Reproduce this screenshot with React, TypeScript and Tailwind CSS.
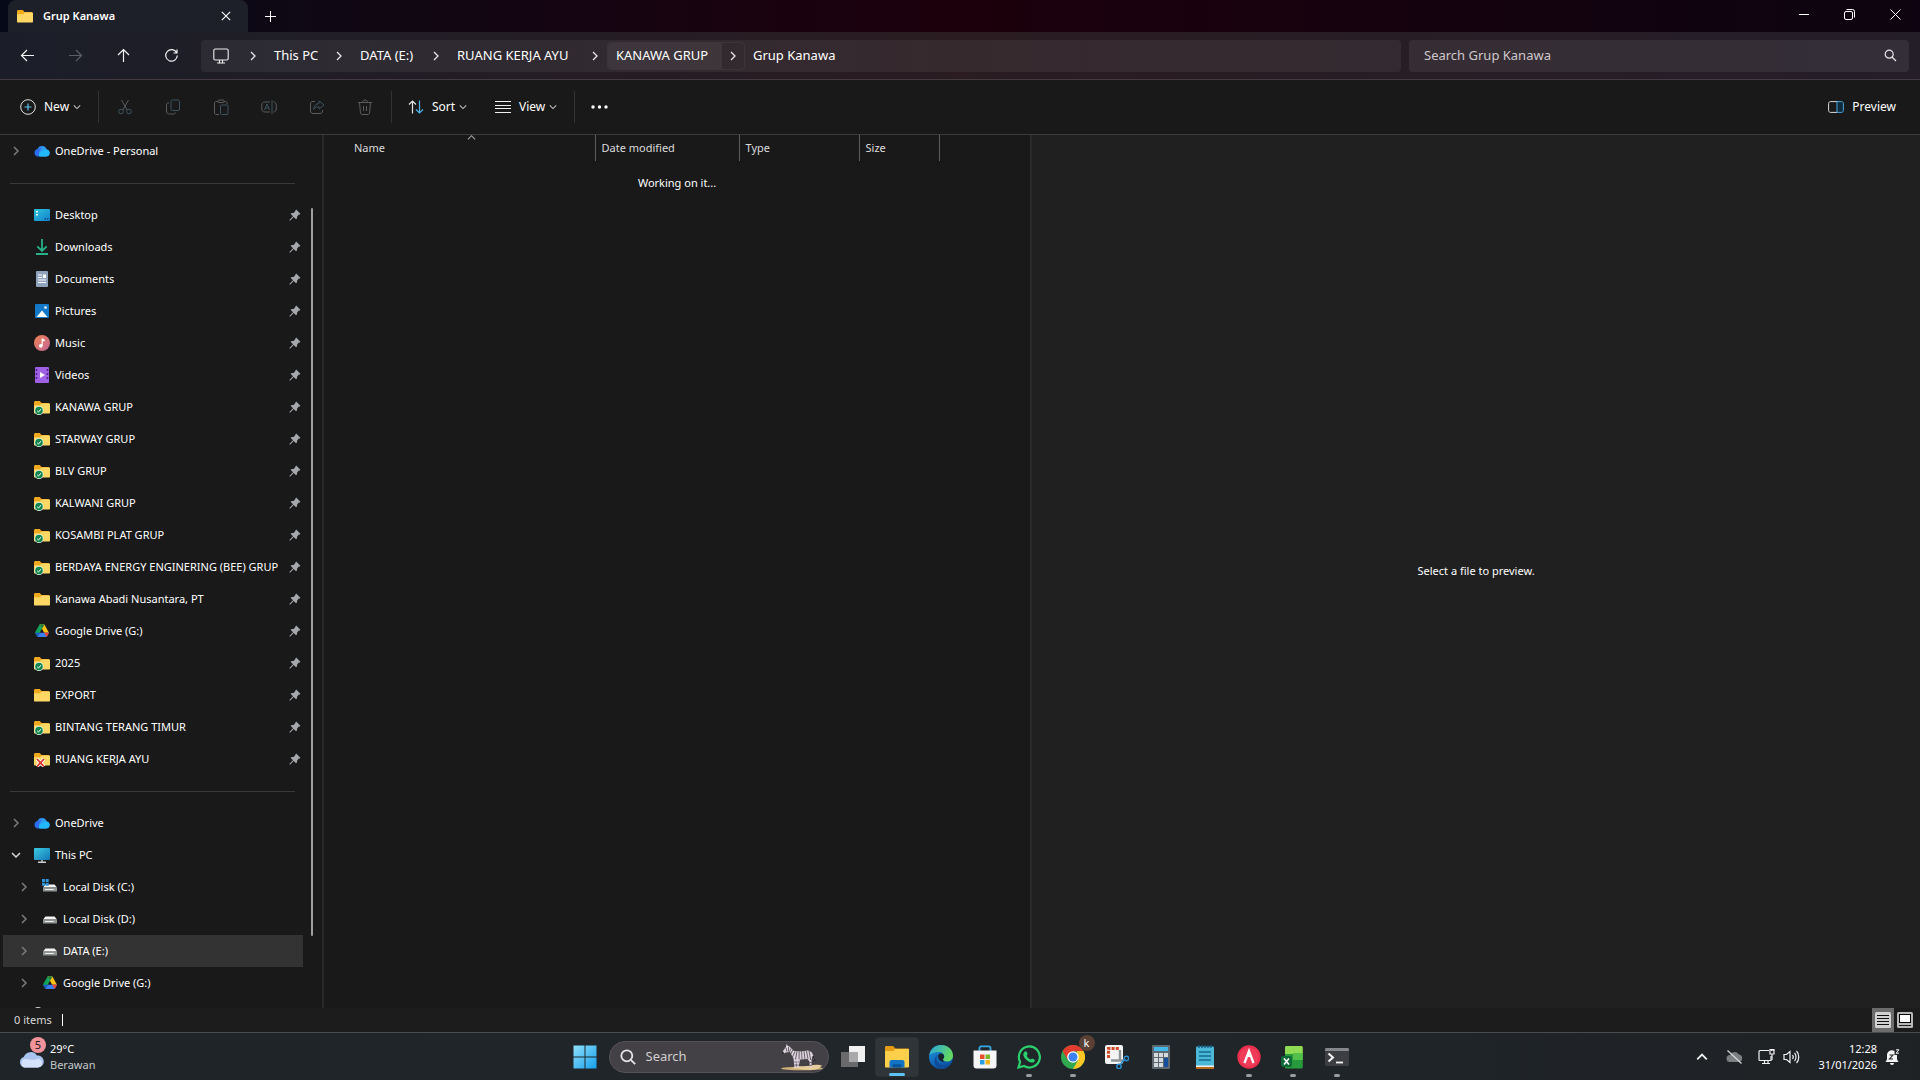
import React, { useState } from 'react';

type Glyph = React.FC;

interface NavItem {
  label: string;
  icon: Glyph;
  pinned?: boolean;
  chevron?: 'right' | 'down';
  nested?: boolean;
}

/* ---------- Sidebar icons ---------- */

const OneDriveIcon: Glyph = () => (
  <svg width="16" height="16" viewBox="0 0 16 16">
    <path d="M4 13.5A3.8 3.8 0 0 1 3.6 6 5 5 0 0 1 8 3l4 3.5-6 7z" fill="#1a6fe0" />
    <path d="M8 3a5 5 0 0 1 4.700 3.400A3.600 3.600 0 0 1 12.500 13.500H6L3.600 6A5 5 0 0 1 8 3z" fill="#2f9bf5" />
    <path d="M12.500 13.500H5.500a3 3 0 0 1 .8-4.600l3.400-2a4 4 0 0 1 3-.5 3.600 3.600 0 0 1-.2 7.100z" fill="#22b8fb" />
    <path d="M4 13.500A3.800 3.800 0 0 1 2 6.900L8 4 5 9.500z" fill="#2d6cf0" />
  </svg>
);

const DesktopIcon: Glyph = () => (
  <svg width="16" height="16" viewBox="0 0 16 16">
    <defs>
      <linearGradient id="desk" x1="0" y1="0" x2="1" y2="1">
        <stop offset="0" stopColor="#2bc4d8" />
        <stop offset="1" stopColor="#1580d0" />
      </linearGradient>
    </defs>
    <rect x="0" y="2" width="16" height="12" rx="1" fill="url(#desk)" />
    <path d="M2 4h2v1.500H2zM2 7h2v1.500H2z" fill="#e8fbff" />
    <path d="M10.500 11h1.500v1.500h-1.500zM13 11h1.500v1.500H13z" fill="#0b4a80" />
  </svg>
);

const DownloadsIcon: Glyph = () => (
  <svg width="16" height="16" viewBox="0 0 16 16" fill="none" stroke="#28b088" strokeWidth="1.800">
    <path d="M8 0v11.500M3.300 7.300L8 12l4.700-4.700M2 15h12" />
  </svg>
);

const DocumentsIcon: Glyph = () => (
  <svg width="16" height="16" viewBox="0 0 16 16">
    <rect x="2" y="0" width="12" height="16" rx="1" fill="#8fa3bd" />
    <path d="M4 4h4M4 6.500h4M4 9h8M4 11.500h8" stroke="#fff" strokeWidth="1.200" />
    <rect x="9" y="3.500" width="3" height="3.500" fill="#fff" />
  </svg>
);

const PicturesIcon: Glyph = () => (
  <svg width="16" height="16" viewBox="0 0 16 16">
    <rect x="1" y="1" width="14" height="14" rx="1" fill="#1478c8" />
    <path d="M2.500 14L8 7.500l5.500 6.500z" fill="#fff" />
    <circle cx="11.500" cy="4.500" r="1.300" fill="#fff" />
  </svg>
);

const MusicIcon: Glyph = () => (
  <svg width="16" height="16" viewBox="0 0 16 16">
    <defs>
      <linearGradient id="music" x1="0" y1="0" x2="1" y2="1">
        <stop offset="0" stopColor="#ee8450" />
        <stop offset="1" stopColor="#c2649a" />
      </linearGradient>
    </defs>
    <circle cx="8" cy="8" r="8" fill="url(#music)" />
    <circle cx="6.800" cy="10.800" r="1.900" fill="#fff" />
    <path d="M7.600 3.500h1.200l2 1.500v1.500l-2-.8v5H7.600z" fill="#fff" />
  </svg>
);

const VideosIcon: Glyph = () => (
  <svg width="16" height="16" viewBox="0 0 16 16">
    <rect x="1" y="0" width="14" height="16" rx="1" fill="#a060e4" />
    <path d="M2.500 2v12M13.500 2v12" stroke="#4a2090" strokeWidth="1.500" strokeDasharray="2 2" />
    <path d="M6 5l5 3-5 3z" fill="#fff" />
  </svg>
);

const folderBody = (
  <>
    <path d="M0 3.500C0 2.500.6 2 1.500 2h4.300l1.700 2H14c1 0 1.500.5 1.500 1.500V8H0z" fill="#f0a81c" />
    <path d="M0 6.200h6L7.700 4.500H15c.6 0 1 .4 1 1v8c0 .6-.4 1-1 1H1c-.6 0-1-.4-1-1z" fill="#ffd765" />
  </>
);

const FolderIcon: Glyph = () => (
  <svg width="16" height="16" viewBox="0 0 16 16">{folderBody}</svg>
);

const SyncedFolderIcon: Glyph = () => (
  <svg width="16" height="16" viewBox="0 0 16 16">
    {folderBody}
    <circle cx="5" cy="11.500" r="4.500" fill="#e8f5ee" />
    <circle cx="5" cy="11.500" r="3.800" fill="#12854c" />
    <path d="M3.200 11.800l1.300 1.300 2.500-3" stroke="#fff" strokeWidth="1" fill="none" />
  </svg>
);

const ErrorFolderIcon: Glyph = () => (
  <svg width="16" height="16" viewBox="0 0 16 16">
    {folderBody}
    <path d="M3 8l7 7.500M10 8l-7 7.500" stroke="#fff" strokeWidth="3.400" />
    <path d="M3 8l7 7.500M10 8l-7 7.500" stroke="#d8362c" strokeWidth="1.800" />
  </svg>
);

const DriveIcon: Glyph = () => (
  <svg width="16" height="16" viewBox="0 0 16 16">
    <path d="M5.600 1.500h4.800L8 5.700 3.400 13.700 1 9.500z" fill="#10a35a" />
    <path d="M10.400 1.500L15 9.700h-4.800L5.600 1.500z" fill="#fcbf14" />
    <path d="M5.600 1.500h4.800L8 5.700z" fill="#0d8043" />
    <path d="M3.400 14l2.400-4.300H15L12.600 14z" fill="#3c7df0" />
    <path d="M12.600 14L10.200 9.700H15z" fill="#e8453a" />
    <path d="M3.400 14L1 9.700h4.800z" fill="#2158c8" />
  </svg>
);

const ThisPcIcon: Glyph = () => (
  <svg width="16" height="16" viewBox="0 0 16 16">
    <defs>
      <linearGradient id="pc" x1="0" y1="0" x2="1" y2="1">
        <stop offset="0" stopColor="#3ccbe0" />
        <stop offset="1" stopColor="#1277b8" />
      </linearGradient>
    </defs>
    <rect x="0" y="1" width="16" height="12" rx="1" fill="url(#pc)" />
    <path d="M8 13v2M4 15.300h8" stroke="#c8d0d4" strokeWidth="1.400" />
  </svg>
);

const diskBody = (
  <>
    <path d="M3.500 5.500h9l2.500 3H1z" fill="#f4f4f4" />
    <rect x="1" y="8.500" width="14" height="4" rx=".5" fill="#8f9492" />
    <path d="M3 10.500h9" stroke="#e8ece8" strokeWidth="1" />
  </>
);

const DiskIcon: Glyph = () => (
  <svg width="16" height="16" viewBox="0 0 16 16">{diskBody}</svg>
);

const SystemDiskIcon: Glyph = () => (
  <svg width="16" height="16" viewBox="0 0 16 16">
    {diskBody}
    <path d="M0 0h3v3H0zM3.700 0h3v3h-3zM0 3.700h3v3H0zM3.700 3.700h3v3h-3z" fill="#2f93d8" />
  </svg>
);

const NetworkIcon: Glyph = () => (
  <svg width="16" height="16" viewBox="0 0 16 16">
    <circle cx="4" cy="4" r="4" fill="#d5d8da" />
    <rect x="2" y="6" width="13" height="8" fill="#3ccbe0" />
  </svg>
);

const PinIcon: Glyph = () => (
  <svg width="12" height="12" viewBox="0 0 12 12" fill="#a4a7ab">
    <path d="M7.200.6L11.400 4.800 10.500 5.700 9.900 5.600 8.100 7.400 8 9.500 7 10.300 4.700 8 1.300 11.400.4 11.600.6 10.700 4 7.300 1.700 5 2.500 4 4.600 3.900 6.400 2.100 6.300 1.500z" />
  </svg>
);

const Chevron: React.FC<{ dir?: 'right' | 'down' | 'up'; size?: number; color?: string; width?: number }> = ({
  dir = 'right', size = 10, color = '#e6e6e6', width = 1.3,
}) => {
  const d = dir === 'right' ? 'M3 1l4 4-4 4' : dir === 'down' ? 'M1 3l4 4 4-4' : 'M1 7l4-4 4 4';
  return (
    <svg width={size} height={size} viewBox="0 0 10 10" fill="none" stroke={color} strokeWidth={width}>
      <path d={d} />
    </svg>
  );
};

/* ---------- Data ---------- */

const QUICK_ACCESS: NavItem[] = [
  { label: 'Desktop', icon: DesktopIcon, pinned: true },
  { label: 'Downloads', icon: DownloadsIcon, pinned: true },
  { label: 'Documents', icon: DocumentsIcon, pinned: true },
  { label: 'Pictures', icon: PicturesIcon, pinned: true },
  { label: 'Music', icon: MusicIcon, pinned: true },
  { label: 'Videos', icon: VideosIcon, pinned: true },
  { label: 'KANAWA GRUP', icon: SyncedFolderIcon, pinned: true },
  { label: 'STARWAY GRUP', icon: SyncedFolderIcon, pinned: true },
  { label: 'BLV GRUP', icon: SyncedFolderIcon, pinned: true },
  { label: 'KALWANI GRUP', icon: SyncedFolderIcon, pinned: true },
  { label: 'KOSAMBI PLAT GRUP', icon: SyncedFolderIcon, pinned: true },
  { label: 'BERDAYA ENERGY ENGINERING (BEE) GRUP', icon: SyncedFolderIcon, pinned: true },
  { label: 'Kanawa Abadi Nusantara, PT', icon: FolderIcon, pinned: true },
  { label: 'Google Drive (G:)', icon: DriveIcon, pinned: true },
  { label: '2025', icon: SyncedFolderIcon, pinned: true },
  { label: 'EXPORT', icon: FolderIcon, pinned: true },
  { label: 'BINTANG TERANG TIMUR', icon: SyncedFolderIcon, pinned: true },
  { label: 'RUANG KERJA AYU', icon: ErrorFolderIcon, pinned: true },
];

const DEVICES: NavItem[] = [
  { label: 'OneDrive', icon: OneDriveIcon, chevron: 'right' },
  { label: 'This PC', icon: ThisPcIcon, chevron: 'down' },
  { label: 'Local Disk (C:)', icon: SystemDiskIcon, chevron: 'right', nested: true },
  { label: 'Local Disk (D:)', icon: DiskIcon, chevron: 'right', nested: true },
  { label: 'DATA (E:)', icon: DiskIcon, chevron: 'right', nested: true },
  { label: 'Google Drive (G:)', icon: DriveIcon, chevron: 'right', nested: true },
];

const CRUMBS = [
  { label: 'This PC', width: 'w-[62px]' },
  { label: 'DATA (E:)', width: 'w-[73px]' },
  { label: 'RUANG KERJA AYU', width: 'w-[135px]' },
  { label: 'KANAWA GRUP', width: 'w-[114px]' },
];

const COLUMNS = [
  { label: 'Name', cell: 'w-[271px] pl-[30px]' },
  { label: 'Date modified', cell: 'w-[144px] pl-1.5' },
  { label: 'Type', cell: 'w-[120px] pl-1.5' },
  { label: 'Size', cell: 'w-20 pl-1.5' },
];

const EDIT_ACTIONS: { label: string; icon: React.ReactNode }[] = [
  {
    label: 'Cut',
    icon: (
      <>
        <path d="M4.500 1l5.600 10M11.500 1L5.900 11" />
        <circle cx="4" cy="12.500" r="2.300" stroke="#3c5560" />
        <circle cx="12" cy="12.500" r="2.300" stroke="#3c5560" />
      </>
    ),
  },
  {
    label: 'Copy',
    icon: (
      <>
        <rect x="6" y="1" width="8.500" height="10.500" rx="1.500" stroke="#3c5560" />
        <path d="M4 4H3C2 4 1.500 5 1.500 6v6c0 2 1 3 3 3h4c1 0 2-.5 2-1.500" />
      </>
    ),
  },
  {
    label: 'Paste',
    icon: (
      <>
        <path d="M5 2.500H3c-.8 0-1.500.5-1.500 1.500v10c0 1 .5 1.500 1.500 1.500h3M11 2.500h1.500c1 0 1.500.5 1.500 1.500v1" />
        <rect x="5" y="1" width="6" height="2.500" rx="1" />
        <rect x="7.500" y="6" width="7.500" height="9.500" rx="1" stroke="#3c5560" />
      </>
    ),
  },
  {
    label: 'Rename',
    icon: (
      <>
        <path d="M9 3H4C2 3 .8 4 .8 6v4c0 2 1.200 3 3.200 3h5M12.500 3c2 0 2.700 1.500 2.700 3v4c0 1.500-.7 3-2.700 3" />
        <path d="M3.500 11L6 5l2.500 6M4.300 9h3.400M11 1v14" stroke="#3c5560" />
      </>
    ),
  },
  {
    label: 'Share',
    icon: (
      <>
        <path d="M6 2.500H4C2.300 2.500 1.500 3.500 1.500 5v7c0 1.500 1 2.500 2.500 2.500h7c1.500 0 2.500-1 2.500-2.500v-1" />
        <path d="M10 2l5 4-5 4V7.800C7.500 7.700 6 8.500 4.500 10.500 5 7 7 4.700 10 4.500z" stroke="#3c5560" />
      </>
    ),
  },
  {
    label: 'Delete',
    icon: (
      <path d="M1 3.500h14M5.500 3.500C5.500 2 6.500 1 8 1s2.500 1 2.500 2.500M2.500 3.500l1 10.500c.1 1 .7 1.500 1.500 1.500h6c.8 0 1.400-.5 1.500-1.500l1-10.500M6.500 7v5M9.500 7v5" />
    ),
  },
];

/* ---------- Window chrome ---------- */

const TitleBar: React.FC = () => (
  <header className="flex h-8 shrink-0 items-stretch bg-linear-to-r from-[#060a18] via-[#1c000c] to-[#0c0410] pl-2">
    <div role="tab" className="flex w-60 items-center rounded-t-lg bg-[#1d2028] pl-[9px] pr-2.5">
      <FolderIcon />
      <span className="ml-2.5 flex-1 text-[11px] font-semibold text-white">Grup Kanawa</span>
      <button aria-label="Close tab" className="flex h-6 w-6 items-center justify-center">
        <svg width="10" height="10" viewBox="0 0 10 10" stroke="#fff" strokeWidth="1.100"><path d="M.8.8l8.400 8.400M9.200.8L.8 9.200" /></svg>
      </button>
    </div>
    <button aria-label="New tab" className="flex w-11 items-center justify-center">
      <svg width="11" height="11" viewBox="0 0 11 11" stroke="#fff" strokeWidth="1"><path d="M5.500 0v11M0 5.500h11" /></svg>
    </button>
    <div className="flex-1" />
    <div className="flex pb-1 pr-0.5">
      <button aria-label="Minimize" className="flex w-[45px] items-center justify-center">
        <svg width="10" height="10" viewBox="0 0 10 10" stroke="#fff"><path d="M0 5.500h10" /></svg>
      </button>
      <button aria-label="Restore" className="flex w-[46px] items-center justify-center">
        <svg width="11" height="11" viewBox="0 0 11 11" fill="none" stroke="#fff"><rect x=".5" y="2.500" width="8" height="8" rx="1.500" /><path d="M2.500.5h6a2 2 0 0 1 2 2v6" /></svg>
      </button>
      <button aria-label="Close" className="flex w-[46px] items-center justify-center">
        <svg width="11" height="11" viewBox="0 0 11 11" stroke="#fff"><path d="M.5.5l10 10M10.500.5l-10 10" /></svg>
      </button>
    </div>
  </header>
);

const NAV_BUTTONS = [
  { label: 'Back', d: 'M14 7.500H1.500M7 2L1.500 7.500 7 13', stroke: '#f2f2f2' },
  { label: 'Forward', d: 'M1 7.500h12.500M8 2l5.500 5.500L8 13', stroke: '#5c5e66' },
  { label: 'Up', d: 'M7.500 14V1.500M2 7l5.500-5.500L13 7', stroke: '#f2f2f2' },
  { label: 'Refresh', d: 'M12.800 5A5.800 5.800 0 1 0 13.300 7.500M13 1.500V5H9.500', stroke: '#f2f2f2' },
];

const AddressRow: React.FC = () => {
  const [query, setQuery] = useState('');
  return (
    <div className="flex h-12 shrink-0 items-center border-b border-[#443a41] bg-linear-to-r from-[#1b1e29] via-[#2a1c21] to-[#241e29] pl-[3px] pr-[11px]">
      {NAV_BUTTONS.map(b => (
        <button key={b.label} aria-label={b.label} className="flex h-8 w-12 shrink-0 items-center justify-center">
          <svg width="15" height="15" viewBox="0 0 15 15" fill="none" stroke={b.stroke} strokeWidth="1.200"><path d={b.d} /></svg>
        </button>
      ))}
      <nav className="ml-1.5 mr-2 flex h-8 min-w-0 flex-1 items-center rounded bg-white/6 text-[13px] text-white">
        <button aria-label="Location" className="flex w-10 items-center justify-center">
          <svg width="16" height="16" viewBox="0 0 16 16" fill="none" stroke="#ededed" strokeWidth="1.100">
            <rect x=".8" y="1" width="14.400" height="11" rx="1.500" /><path d="M6.500 12v3M9.500 12v3M4 15h8" />
          </svg>
        </button>
        <span className="flex w-6 justify-center"><Chevron /></span>
        {CRUMBS.map(c => {
          const hot = c.label === 'KANAWA GRUP';
          return (
            <div key={c.label} className={`flex h-7 items-center rounded border ${hot ? 'border-white/5' : 'border-transparent'}`}>
              <button className={`h-full whitespace-nowrap pl-2 text-left ${c.width} ${hot ? 'rounded-l bg-white/6' : ''}`}>{c.label}</button>
              <button aria-label={`Open ${c.label}`} className="flex w-[22px] justify-center"><Chevron /></button>
            </div>
          );
        })}
        <button className="px-2">Grup Kanawa</button>
      </nav>
      <label className="flex h-8 w-[500px] min-w-0 items-center rounded bg-white/7 pl-[15px] pr-3">
        <input
          aria-label="Search Grup Kanawa"
          value={query}
          onChange={e => setQuery(e.target.value)}
          placeholder="Search Grup Kanawa"
          className="min-w-0 flex-1 bg-transparent text-[13px] text-white outline-none placeholder:text-[#cfc8cb]"
        />
        <svg width="13" height="13" viewBox="0 0 13 13" fill="none" stroke="#e8e4e6" strokeWidth="1.200"><circle cx="5.200" cy="5.200" r="4" /><path d="M8 8l4 4" /></svg>
      </label>
    </div>
  );
};

const Divider = () => <div className="h-8 w-px bg-[#333]" />;

const CommandBar: React.FC = () => (
  <div className="flex h-[55px] shrink-0 items-center border-b border-[#3c3c3c] bg-[#191919] text-[12px] text-white">
    <button className="flex w-[98px] items-center pl-5">
      <svg width="16" height="16" viewBox="0 0 16 16" fill="none" stroke="#e4e4e4">
        <circle cx="8" cy="8" r="7.300" /><path d="M8 4.500v7M4.500 8h7" stroke="#5cc0f0" strokeWidth="1.200" />
      </svg>
      <span className="ml-2 mr-1">New</span>
      <Chevron dir="down" size={8} color="#c0c0c0" />
    </button>
    <Divider />
    <div className="flex pl-0.5">
      {EDIT_ACTIONS.map(a => (
        <button key={a.label} aria-label={a.label} disabled className="flex h-8 w-12 items-center justify-center">
          <svg width="16" height="16" viewBox="0 0 16 16" fill="none" stroke="#5a5c5e">{a.icon}</svg>
        </button>
      ))}
    </div>
    <div className="ml-0.5"><Divider /></div>
    <button className="flex w-[87px] items-center pl-4">
      <svg width="16" height="14" viewBox="0 0 16 14" fill="none" strokeWidth="1.200">
        <path d="M4.500 13.500V1M1 4.500L4.500 1 8 4.500" stroke="#e4e4e4" /><path d="M11.500.5V13M8 9.500l3.500 3.500L15 9.500" stroke="#4fb4ea" />
      </svg>
      <span className="ml-2 mr-1">Sort</span>
      <Chevron dir="down" size={8} color="#c0c0c0" />
    </button>
    <button className="flex w-[95px] items-center pl-4">
      <svg width="16" height="12" viewBox="0 0 16 12" stroke="#f0f0f0"><path d="M0 .5h16M0 4.500h16M0 7.500h16M0 11.500h16" /></svg>
      <span className="ml-2 mr-1">View</span>
      <Chevron dir="down" size={8} color="#c0c0c0" />
    </button>
    <Divider />
    <button aria-label="See more" className="flex h-8 w-12 items-center justify-center">
      <svg width="17" height="4" viewBox="0 0 17 4" fill="#fff"><circle cx="2" cy="2" r="1.700" /><circle cx="8.500" cy="2" r="1.700" /><circle cx="15" cy="2" r="1.700" /></svg>
    </button>
    <button className="ml-auto flex items-center gap-2 pr-6">
      <svg width="16" height="12" viewBox="0 0 16 12" fill="none">
        <path d="M9 .6H2.500C1.400.6.600 1.400.6 2.500v7c0 1.100.8 1.900 1.900 1.900H9" stroke="#ddd" />
        <path d="M9 .6h4.500c1.100 0 1.900.8 1.900 1.900v7c0 1.100-.8 1.900-1.900 1.900H9z" stroke="#4aa8dc" fill="#0f2a3a" />
      </svg>
      Preview
    </button>
  </div>
);

/* ---------- Sidebar ---------- */

const NavRow: React.FC<{ item: NavItem; selected?: boolean; onSelect: () => void }> = ({ item, selected, onSelect }) => {
  const Icon = item.icon;
  return (
    <li>
      <button
        onClick={onSelect}
        className={`flex h-8 w-full items-center pr-0.5 text-left ${item.nested ? 'pl-[15px]' : 'pl-[7px]'} ${selected ? 'bg-[#333]' : ''}`}
      >
        <span className="flex w-3 shrink-0 justify-center">
          {item.chevron && <Chevron dir={item.chevron} size={10} width={1.5} color={item.chevron === 'down' ? '#d8d8d8' : '#7c7c7c'} />}
        </span>
        <span className="ml-3 shrink-0"><Icon /></span>
        <span className="ml-[5px] flex-1 whitespace-nowrap">{item.label}</span>
        {item.pinned && <span className="shrink-0"><PinIcon /></span>}
      </button>
    </li>
  );
};

const Sidebar: React.FC = () => {
  const [selected, setSelected] = useState('DATA (E:)');
  return (
    <aside className="flex w-[324px] shrink-0 overflow-hidden border-r-2 border-[#292929] text-[11px] text-white">
      <div className="w-[303px] shrink-0 pl-[3px]">
        <ul>
          <NavRow item={{ label: 'OneDrive - Personal', icon: OneDriveIcon, chevron: 'right' }} onSelect={() => setSelected('OneDrive - Personal')} />
        </ul>
        <hr className="mb-[15px] ml-[7px] mr-2 mt-4 border-[#3a3a3a]" />
        <ul>
          {QUICK_ACCESS.map(item => (
            <NavRow key={item.label} item={item} onSelect={() => setSelected(item.label)} />
          ))}
        </ul>
        <hr className="mb-[15px] ml-[7px] mr-2 mt-4 border-[#3a3a3a]" />
        <ul>
          {DEVICES.map(item => (
            <NavRow key={item.label} item={item} selected={item.label === selected} onSelect={() => setSelected(item.label)} />
          ))}
          <li>
            <button aria-label="Network" className="flex h-8 w-full items-center pl-[31px]"><NetworkIcon /></button>
          </li>
        </ul>
      </div>
      <div className="flex flex-1 justify-center pb-[72px] pr-0.5 pt-[73px]">
        <div className="w-0.5 rounded bg-[#9f9f9f]" />
      </div>
    </aside>
  );
};

/* ---------- File list & preview ---------- */

const FileList: React.FC = () => (
  <section className="min-w-0 flex-[707]">
    <table className="w-[615px] table-fixed border-collapse text-[11px] text-[#dcdcdc]">
      <thead>
        <tr className="h-[26px]">
          {COLUMNS.map(c => (
            <th key={c.label} scope="col" className={`relative border-r border-[#5c5c5c] p-0 text-left font-normal ${c.cell}`}>
              {c.label}
              {c.label === 'Name' && (
                <span className="absolute -top-0.5 left-1/2 ml-2"><Chevron dir="up" size={9} color="#a8a8a8" width={1.2} /></span>
              )}
            </th>
          ))}
        </tr>
      </thead>
    </table>
    <p className="mt-3 text-center text-[11px] leading-5 text-white">Working on it...</p>
  </section>
);

const PreviewPane: React.FC = () => (
  <section className="flex min-w-0 flex-[889] items-center justify-center border-l-2 border-[#2a2a2a] bg-[#202020] text-[11px] text-white">
    Select a file to preview.
  </section>
);

const StatusBar: React.FC = () => (
  <footer className="flex h-6 shrink-0 items-center bg-[#1c1c1c] pl-3.5 pr-[7px] text-[11px] text-[#d8d8d8]">
    <span>0 items</span>
    <span className="ml-2.5 h-3 w-px bg-white" />
    <button aria-label="Details view" className="ml-auto flex h-full w-[22px] items-center justify-center bg-[#6c6c6c]">
      <svg width="16" height="16" viewBox="0 0 16 16"><rect width="16" height="16" rx="1.500" fill="#d2d2d2" /><path d="M2 3.500h12M2 6.500h12M2 9.500h12M2 12.500h12" stroke="#111" /></svg>
    </button>
    <button aria-label="Large icons view" className="ml-[3px]">
      <svg width="16" height="16" viewBox="0 0 16 16"><rect width="16" height="16" rx="1.500" fill="#b8b8b8" /><rect x="2.500" y="2.500" width="11" height="8" fill="#fff" stroke="#000" /><path d="M2 13.500h12" stroke="#222" /></svg>
    </button>
  </footer>
);

/* ---------- Taskbar ---------- */

interface TaskApp {
  name: string;
  running?: boolean;
  active?: boolean;
  icon: React.ReactNode;
}

const APPS: TaskApp[] = [
  {
    name: 'Task View',
    icon: <><rect x="8" y="1" width="16" height="16" fill="#f0f0f0" /><rect x="0" y="7" width="17" height="15" fill="#6a6a6c" /><rect x="8" y="7" width="9" height="10" fill="#a9a9ab" /></>,
  },
  {
    name: 'File Explorer',
    active: true,
    icon: (
      <>
        <path d="M0 2.500C0 1.500.6 1 1.500 1H8l2.500 2.500H23c.6 0 1 .5 1 1V8H0z" fill="#e39c14" />
        <path d="M0 6h8l2.500-2H23c.6 0 1 .4 1 1v16.500c0 .6-.4 1-1 1H1c-.6 0-1-.4-1-1z" fill="#fdd04c" />
        <path d="M4.500 22.500V17c0-1 .8-2 2-2h11c1.200 0 2 1 2 2v5.500z" fill="#1273c4" />
        <path d="M7.500 22.500v-2.200c0-.6.4-1 1-1h7c.6 0 1 .4 1 1v2.200z" fill="#0a549c" />
      </>
    ),
  },
  {
    name: 'Edge',
    icon: (
      <>
        <defs>
          <linearGradient id="edge1" x1="0" y1="0" x2="1" y2="0.400"><stop offset="0" stopColor="#2aa6e0" /><stop offset="1" stopColor="#62d860" /></linearGradient>
          <linearGradient id="edge2" x1="0" y1="0" x2="0.500" y2="1"><stop offset="0" stopColor="#1c9ae0" /><stop offset="1" stopColor="#0d4fa4" /></linearGradient>
        </defs>
        <circle cx="12" cy="12" r="12" fill="url(#edge2)" />
        <path d="M.3 10C1.500 4 6 0 12 0c7 0 12 5 12 10.500 0 4-3 6-6 6-2.500 0-4-1-4-2s1.200-1.300 1.200-3.200C15.200 9 13 7 10 7 6 7 2 8.500.3 10z" fill="url(#edge1)" />
        <path d="M9 9.500c-2.500 2-2 7 1.500 9.500 3.500 2.300 8 1.500 11.500-.5-2 3.500-5.500 5.500-10 5.500-4-1-6.500-4-6.500-8 0-3 1.500-5.500 3.500-6.500z" fill="#0f4b96" />
        <path d="M14 14.500c0-1 1.200-1.300 1.200-3.200C15 9.500 13.500 8.500 12 8.500c-2.500 0-3.500 2.500-2.500 5 1 2 3 3.500 6 3.500-.8-.5-1.500-1.500-1.500-2.500z" fill="#15242c" />
      </>
    ),
  },
  {
    name: 'Microsoft Store',
    icon: (
      <>
        <path d="M6.500 6V3c0-1 .6-1.700 1.700-1.700h7.600c1.100 0 1.700.7 1.700 1.700v3" stroke="#36a8e4" strokeWidth="1.800" fill="none" />
        <path d="M.5 5.500h23V20.500c0 2-1 3-3 3h-17c-2 0-3-1-3-3z" fill="#f6f6f8" />
        <path d="M7 9.500h4.500v4.500H7z" fill="#e8502c" /><path d="M12.500 9.500H17v4.500h-4.500z" fill="#7cb82c" /><path d="M7 15h4.500v4.500H7z" fill="#2aa0e4" /><path d="M12.500 15H17v4.500h-4.500z" fill="#f8b420" />
      </>
    ),
  },
  {
    name: 'WhatsApp',
    running: true,
    icon: (
      <>
        <path d="M1.500 22.500l1.600-5.600A10.500 10.500 0 1 1 7 21z" fill="none" stroke="#2bd06c" strokeWidth="2.200" />
        <path d="M8 6.500c.8-.6 1.500-.2 1.800.5l.8 1.800c.2.600-.9 1.500-.9 1.900.8 1.700 2.100 2.900 3.800 3.700.5.100 1.200-1.200 1.800-1l2 1c.9.500.4 2-.3 2.500-1.500 1.100-3.600.7-6-.7-2.400-1.500-4-3.600-4.600-5.600-.3-1.600.4-3.200 1.600-4.100z" fill="#2bd06c" />
      </>
    ),
  },
  {
    name: 'Chrome',
    running: true,
    icon: (
      <>
        <circle cx="12" cy="12" r="12" fill="#2fa84f" />
        <path d="M1.600 6A12 12 0 0 1 22.400 6L12 6.500 6.800 15z" fill="#e33b2e" />
        <path d="M22.400 6A12 12 0 0 1 12 24l5.200-9L16 6z" fill="#fcc624" />
        <circle cx="12" cy="12" r="5.800" fill="#fff" /><circle cx="12" cy="12" r="4.500" fill="#3b82f0" />
      </>
    ),
  },
  {
    name: 'Snipping Tool',
    icon: (
      <>
        <rect x="0" y="0" width="18" height="19" rx="2" fill="#f4f4f4" />
        <path d="M3.500 13V3.500H15" fill="none" stroke="#d04a28" strokeWidth="3" strokeDasharray="3 1.200" />
        <path d="M15 5v10M6 15.500h13" stroke="#8d9498" strokeWidth="2.400" />
        <circle cx="21.500" cy="13.500" r="2.200" fill="none" stroke="#2a8fd4" strokeWidth="1.500" /><circle cx="14" cy="21.500" r="2.200" fill="none" stroke="#2a8fd4" strokeWidth="1.500" />
        <path d="M19.500 14.500L15 19.500" stroke="#2a8fd4" strokeWidth="1.300" />
      </>
    ),
  },
  {
    name: 'Calculator',
    icon: (
      <>
        <rect x="3" y="0" width="18" height="24" rx="1" fill="#5d6870" /><rect x="5" y="2" width="14" height="4" fill="#42b8e8" />
        <path d="M5 8h4v4H5zM10 8h4v4h-4zM15 8h4v4h-4zM5 13h4v4H5zM10 13h4v4h-4zM5 18h4v4H5zM10 18h4v4h-4z" fill="#d4dade" />
        <path d="M15 13h4v9h-4z" fill="#154f9c" />
      </>
    ),
  },
  {
    name: 'Notepad',
    icon: (
      <>
        <rect x="3" y="1.500" width="18" height="22" rx="1" fill="#4cb8d8" /><path d="M3 22h18v2H3z" fill="#b86a1c" /><path d="M3 20.500h18V22H3z" fill="#f0f0f0" />
        <path d="M6 0v3M9 0v3M12 0v3M15 0v3M18 0v3" stroke="#0e5a80" strokeWidth="1.300" /><path d="M6 7h12M6 11h12M6 15h12" stroke="#146a94" strokeWidth="1.500" />
      </>
    ),
  },
  {
    name: 'Accurate',
    running: true,
    icon: <><circle cx="12" cy="12" r="11.700" fill="#e8304c" /><circle cx="12" cy="12" r="9.500" fill="#f03c58" /><path d="M7.500 18L12 6l4.500 12M12 6v6" fill="none" stroke="#fff" strokeWidth="2.300" /></>,
  },
  {
    name: 'Excel',
    running: true,
    icon: (
      <>
        <path d="M4 2.500C4 1.600 4.600 1 5.500 1h14.800c.9 0 1.500.6 1.500 1.500V9H4z" fill="#8fdc54" /><path d="M4 9h17.800v13c0 .9-.6 1.500-1.500 1.500H5.500C4.600 23.500 4 23 4 22z" fill="#279a3c" /><path d="M12 8h9.800v7H12z" fill="#54c04c" />
        <rect x="0" y="11" width="11" height="11" rx="2" fill="#0f6a38" /><path d="M3 13.500l5 6M8 13.500l-5 6" stroke="#fff" strokeWidth="1.600" />
      </>
    ),
  },
  {
    name: 'Terminal',
    running: true,
    icon: <><rect x="0" y="3" width="24" height="18" rx="1.500" fill="#3c3e42" /><path d="M0 4.500C0 3.600.6 3 1.500 3h21c.9 0 1.500.6 1.500 1.500V6H0z" fill="#85888c" /><path d="M3.500 8.500L8 12.500l-4.500 4" stroke="#f4f4f4" strokeWidth="2" fill="none" /><path d="M11 17.500h7" stroke="#f4f4f4" strokeWidth="1.800" /></>,
  },
];

const Zebra: React.FC = () => (
  <svg width="44" height="30" viewBox="0 0 44 30">
    <ellipse cx="22" cy="26.500" rx="21" ry="1.800" fill="#cfae78" />
    <path d="M12 26c5-3 14-1 18-2.500 4-1 9-1 12 0-2 3-6 4.500-14 4.500z" fill="#e6cc9a" />
    <path d="M2.500 9.500L6 5 6.500 2 8 4 9.500 4.500 14 9 21 9.500 28 8.500 31.500 10 33.500 14 35 18 33.500 17.500 32.500 14 31.500 18 31.500 26 30 26 29.500 19.500 27.500 17 20 17.500 18.500 26 17 26 16.800 18 16 26 14.500 26 13.500 16.500 10 10 5.500 10.500 3.500 12z" fill="#ddd3dd" />
    <path d="M6 6l1 3.500M8.500 5v4.500M11 6.500L9.500 10M12.800 8l-2 4M15 9.500L12.500 15M17 9.500l-1.500 8M19.200 9.500L19 17.500M21.500 9.500L22 17M24 9.200l1 8M26.500 9l1.500 8M29 9l1.700 9M14.300 20h2M14.500 23h2M17.500 20h1.500M17.200 23h1.500M29.800 20.500h1.800M29.800 23.500h1.800" stroke="#4a404c" strokeWidth=".8" />
    <path d="M2.500 9.500l1 2.500M33 14l2 5" stroke="#2c242e" strokeWidth="1.400" />
  </svg>
);

const Taskbar: React.FC = () => (
  <div className="grid h-12 shrink-0 grid-cols-[1fr_auto_1fr] items-center border-t border-[#4a4c4d] bg-linear-to-r from-[#1e2428] via-[#20262a] to-[#1f2225]">
    <button className="relative flex items-center gap-1.5 pl-[18px] text-left text-[11px] leading-4">
      <svg width="26" height="32" viewBox="0 0 26 32">
        <path d="M6 26.500a5.500 5.500 0 0 1-.3-10.500A7.500 7.500 0 0 1 19 14.500a6 6 0 0 1 1.500 12z" fill="#a9c4ee" />
        <path d="M6 26.500a5 5 0 0 1-1-8c4-2 9 2 14-.5 3-1 5.500 2 5 4.500a5 5 0 0 1-4 4z" fill="#d4e2fa" />
      </svg>
      <span className="absolute -top-1 left-[30px] flex h-4 w-4 items-center justify-center rounded-full bg-[#f2939c] text-[11px] text-[#22181a]">5</span>
      <span>
        <span className="block text-white">29°C</span>
        <span className="block text-[#c4c8ca]">Berawan</span>
      </span>
    </button>

    <div className="flex items-center">
      <button aria-label="Start" className="flex h-11 w-[46px] items-center justify-center">
        <svg width="24" height="24" viewBox="0 0 24 24">
          <defs><linearGradient id="win" x1="0" y1="0" x2="1" y2="1"><stop offset="0" stopColor="#8fe0fb" /><stop offset="1" stopColor="#16a0ec" /></linearGradient></defs>
          <path d="M.5.5h11v11H.5zM12.500.5h11v11h-11zM.5 12.500h11v11H.5zM12.500 12.500h11v11h-11z" fill="url(#win)" />
        </svg>
      </button>
      <label className="ml-px mr-0.5 flex h-8 w-[220px] items-center rounded-full border border-[#565358] bg-[#444146] pl-2.5 pr-1">
        <svg width="16" height="16" viewBox="0 0 16 16" fill="none" stroke="#e4e4e4" strokeWidth="1.800"><circle cx="6.800" cy="6.800" r="5.500" /><path d="M10.800 10.800l4.400 4.400" /></svg>
        <input aria-label="Search" placeholder="Search" className="ml-2.5 w-0 flex-1 bg-transparent text-[13px] text-white outline-none placeholder:text-[#d0ced1]" />
        <Zebra />
      </label>
      {APPS.map(app => (
        <button
          key={app.name}
          aria-label={app.name}
          className={`relative flex h-10 w-11 items-center justify-center ${app.active ? 'rounded border border-white/5 bg-white/7 bg-clip-padding' : ''}`}
        >
          <svg width="24" height="24" viewBox="0 0 24 24">{app.icon}</svg>
          {app.name === 'Chrome' && (
            <span className="absolute -top-0.5 right-0 flex h-4 w-4 items-center justify-center rounded-full bg-[#5a4035] text-[11px] leading-3 text-white">k</span>
          )}
          {app.active && <span className="absolute bottom-0 h-[3px] w-4 rounded-full bg-[#5cc4f4]" />}
          {app.running && <span className="absolute bottom-0 h-[3px] w-1.5 rounded-full bg-[#9a9c9e]" />}
        </button>
      ))}
    </div>

    <div className="flex items-center justify-end pr-5 text-white">
      <button aria-label="Show hidden icons" className="flex w-8 justify-center"><Chevron dir="up" size={12} color="#f0f0f0" width={1.5} /></button>
      <button aria-label="OneDrive offline" className="flex w-8 justify-center">
        <svg width="17" height="14" viewBox="0 0 17 14"><path d="M4 12a3.500 3.500 0 0 1 0-7 5 5 0 0 1 9-.5 3.800 3.800 0 0 1 0 7.500z" fill="#7c7f82" /><path d="M1.500.5l14 13" stroke="#d8d8d8" strokeWidth="1.200" /></svg>
      </button>
      <button aria-label="Network and volume" className="ml-2 flex items-center gap-2">
        <svg width="17" height="17" viewBox="0 0 17 17" fill="none" stroke="#f0f0f0" strokeWidth="1.200"><path d="M11 2.500H2c-.8 0-1 .4-1 1v8c0 .6.400 1 1 1h11V8M4 15.500h8M6.500 12.500v3M10 12.500v3" /><path d="M12 1.500h4V6h-4zM14 6v6M13.500 1.500V3M15 1.500V3" /></svg>
        <svg width="17" height="16" viewBox="0 0 17 16" fill="none" stroke="#f0f0f0" strokeWidth="1.200"><path d="M1 5.500h2.500L7 2.500v11l-3.500-3H1zM9.500 6c.8 1 .8 3 0 4M11.500 4c2 2 2 6 0 8M13.500 2c3 3 3 9 0 12" /></svg>
      </button>
      <button className="ml-[18px] flex items-center gap-2 text-right text-[11px] leading-4">
        <span>
          <span className="block">12:28</span>
          <span className="block">31/01/2026</span>
        </span>
        <svg width="15" height="16" viewBox="0 0 15 16">
          <path d="M2 10.500V6a4.800 4.800 0 0 1 7-4.200h.5V6H12v4.500l1.500 2.500H.5zM5 14h4a2 2 0 0 1-4 0z" fill="#f4f4f4" />
          <path d="M4.500 6h3.500l-3.500 4H8" fill="none" stroke="#1f2426" strokeWidth="1.100" /><path d="M11 .8h3l-3 3.400h3" fill="none" stroke="#f4f4f4" />
        </svg>
      </button>
    </div>
  </div>
);

const App: React.FC = () => (
  <div className="flex h-screen flex-col overflow-hidden bg-[#191919] font-['Noto_Sans',sans-serif]">
    <TitleBar />
    <AddressRow />
    <CommandBar />
    <main className="flex min-h-0 flex-1">
      <Sidebar />
      <FileList />
      <PreviewPane />
    </main>
    <StatusBar />
    <Taskbar />
  </div>
);

export default App;
